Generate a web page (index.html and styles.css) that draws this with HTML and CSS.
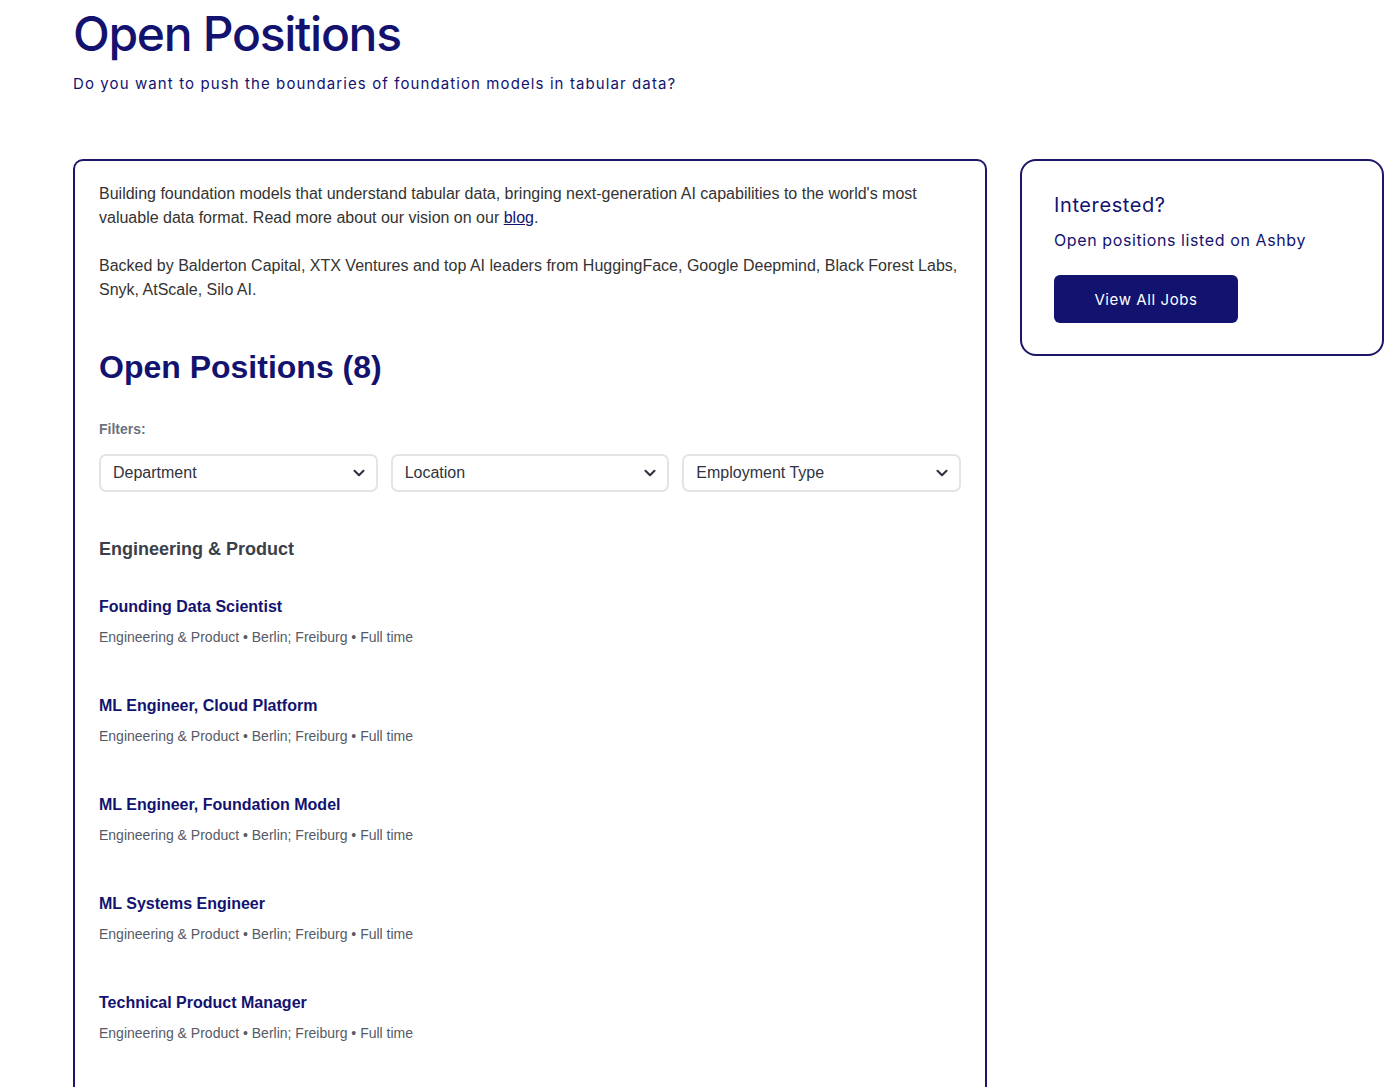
FILE: index.html
```html
<!DOCTYPE html>
<html>
<head>
    <meta charset="utf-8">
    <meta name="viewport" content="width=device-width, initial-scale=1">
    <title>Open Positions</title>
    <link rel="stylesheet" href="styles.css">
</head>
<body>
    <header class="intro">
        <h1>Open Positions</h1>
        <p>Do you want to push the boundaries of foundation models in tabular data?</p>
    </header>

    <div class="layout">
        <main class="board">
            <p class="blurb">Building foundation models that understand tabular data, bringing next-generation AI capabilities to the world's most valuable data format. Read more about our vision on our <a href="#">blog</a>.</p>
            <p class="blurb">Backed by Balderton Capital, XTX Ventures and top AI leaders from HuggingFace, Google Deepmind, Black Forest Labs, Snyk, AtScale, Silo AI.</p>

            <h2 class="board-title">Open Positions (8)</h2>

            <div class="filters">
                <label>Filters:</label>
                <div class="filter-row">
                    <div class="select">
                        <span>Department</span>
                        <svg viewBox="0 0 24 24"><path d="M6 9l6 6 6-6"/></svg>
                    </div>
                    <div class="select">
                        <span>Location</span>
                        <svg viewBox="0 0 24 24"><path d="M6 9l6 6 6-6"/></svg>
                    </div>
                    <div class="select">
                        <span>Employment Type</span>
                        <svg viewBox="0 0 24 24"><path d="M6 9l6 6 6-6"/></svg>
                    </div>
                </div>
            </div>

            <section class="dept">
                <h3>Engineering &amp; Product</h3>

                <div class="job">
                    <a href="#">Founding Data Scientist</a>
                    <p>Engineering &amp; Product • Berlin; Freiburg • Full time</p>
                </div>
                <div class="job">
                    <a href="#">ML Engineer, Cloud Platform</a>
                    <p>Engineering &amp; Product • Berlin; Freiburg • Full time</p>
                </div>
                <div class="job">
                    <a href="#">ML Engineer, Foundation Model</a>
                    <p>Engineering &amp; Product • Berlin; Freiburg • Full time</p>
                </div>
                <div class="job">
                    <a href="#">ML Systems Engineer</a>
                    <p>Engineering &amp; Product • Berlin; Freiburg • Full time</p>
                </div>
                <div class="job">
                    <a href="#">Technical Product Manager</a>
                    <p>Engineering &amp; Product • Berlin; Freiburg • Full time</p>
                </div>
            </section>
        </main>

        <aside class="side">
            <div class="side-card">
                <h4>Interested?</h4>
                <p>Open positions listed on Ashby</p>
                <a class="btn" href="#">View All Jobs</a>
            </div>
        </aside>
    </div>
</body>
</html>
```

FILE: styles.css
```css
* {
    margin: 0;
    padding: 0;
    box-sizing: border-box;
}
body {
    background: #fff;
    font-family: 'Liberation Sans', Arial, sans-serif;
    color: #13136f;
}
.intro {
    padding: 4px 0 0 73px;
}
.intro h1 {
    font-family: 'Inter', sans-serif;
    font-size: 48px;
    font-weight: 500;
    line-height: 60px;
    letter-spacing: -1.3px;
}
.intro p {
    font-family: 'Inter', sans-serif;
    font-size: 15px;
    letter-spacing: 1.1px;
    margin-top: 10px;
}
.layout {
    display: grid;
    grid-template-columns: 914px 364px;
    gap: 33px;
    padding-left: 73px;
    margin-top: 66px;
    align-items: start;
}
.board {
    border: 2px solid #1b1668;
    border-bottom: 0;
    border-radius: 10px 10px 0 0;
    padding: 21px 24px 60px;
    min-height: 960px;
}
.blurb {
    font-size: 16px;
    line-height: 24px;
    color: #333;
    margin-bottom: 24px;
}
.blurb a {
    color: #13136f;
}
.board-title {
    font-size: 32px;
    font-weight: 700;
    margin-top: 47px;
}
.filters {
    margin-top: 35px;
}
.filters label {
    display: block;
    font-size: 14px;
    font-weight: 700;
    color: #6b7280;
}
.filter-row {
    display: grid;
    grid-template-columns: repeat(3, 1fr);
    gap: 13px;
    margin-top: 17px;
}
.select {
    display: flex;
    align-items: center;
    justify-content: space-between;
    height: 38px;
    border: 2px solid #e3e3e8;
    border-radius: 7px;
    padding: 0 8px 0 12px;
    font-size: 16px;
    color: #2f3340;
}
.select svg {
    width: 18px;
    height: 18px;
    fill: none;
    stroke: #2f3340;
    stroke-width: 2.8;
    stroke-linecap: round;
    stroke-linejoin: round;
}
.dept {
    margin-top: 47px;
}
.dept h3 {
    font-size: 18px;
    font-weight: 700;
    color: #3a3f4b;
}
.job {
    height: 72px;
    margin-top: 38px;
    margin-bottom: 27px;
}
.job + .job {
    margin-top: 0;
}
.job a {
    display: block;
    font-size: 16px;
    font-weight: 700;
    color: #13136f;
    text-decoration: none;
}
.job p {
    font-size: 14px;
    color: #555a66;
    margin-top: 13px;
}
.side-card {
    border: 2px solid #1b1668;
    border-radius: 16px;
    padding: 32px 32px 31px;
}
.side-card h4 {
    font-family: 'Inter', sans-serif;
    font-size: 20px;
    font-weight: 400;
    letter-spacing: 0.6px;
}
.side-card p {
    font-family: 'Inter', sans-serif;
    font-size: 16px;
    letter-spacing: 0.6px;
    margin-top: 13px;
}
.btn {
    display: flex;
    align-items: center;
    justify-content: center;
    width: 184px;
    height: 48px;
    margin-top: 25px;
    background: #12126f;
    color: #fff;
    border-radius: 6px;
    font-family: 'Inter', sans-serif;
    font-size: 15px;
    letter-spacing: 0.6px;
    text-decoration: none;
}
```
